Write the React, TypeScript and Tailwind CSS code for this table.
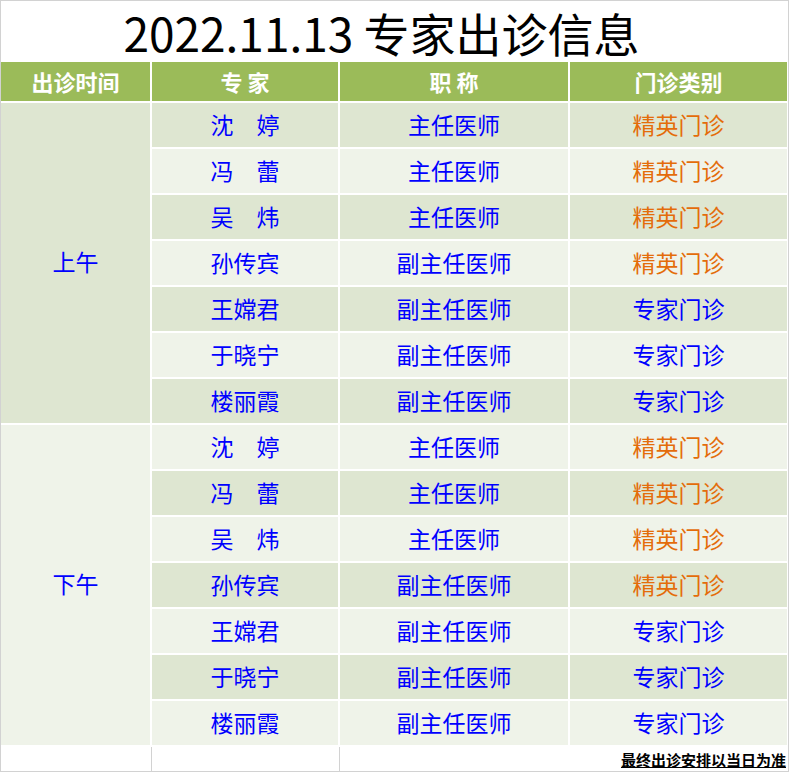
import React from "react";

type Row = { name: string; title: string; type: string; elite: boolean };

const rows: Row[] = [
  { name: "沈\u3000婷", title: "主任医师", type: "精英门诊", elite: true },
  { name: "冯\u3000蕾", title: "主任医师", type: "精英门诊", elite: true },
  { name: "吴\u3000炜", title: "主任医师", type: "精英门诊", elite: true },
  { name: "孙传宾", title: "副主任医师", type: "精英门诊", elite: true },
  { name: "王嫦君", title: "副主任医师", type: "专家门诊", elite: false },
  { name: "于晓宁", title: "副主任医师", type: "专家门诊", elite: false },
  { name: "楼丽霞", title: "副主任医师", type: "专家门诊", elite: false },
];

const DARK = "bg-[#dee6d1]";
const LIGHT = "bg-[#eff3e9]";

export default function App() {
  const cells: React.ReactNode[] = [];
  const sessions = [
    { label: "上午", offset: 0, bg: DARK },
    { label: "下午", offset: 7, bg: LIGHT },
  ];
  sessions.forEach((s) => {
    cells.push(
      <div
        key={s.label}
        className={`${s.bg} flex items-center justify-center pb-[4px] text-[23px] text-[#0000ff]`}
        style={{ gridRow: `${s.offset + 2} / span 7`, gridColumn: "1" }}
      >
        {s.label}
      </div>
    );
    rows.forEach((r, i) => {
      const idx = s.offset + i;
      const bg = idx % 2 === 0 ? DARK : LIGHT;
      const rowStyle = { gridRow: `${idx + 2}` };
      cells.push(
        <div key={`${s.label}-n-${i}`} className={`${bg} flex items-center justify-center pb-[2px] text-[23px] text-[#0000ff]`} style={{ ...rowStyle, gridColumn: "2" }}>
          {r.name}
        </div>,
        <div key={`${s.label}-t-${i}`} className={`${bg} flex items-center justify-center pb-[2px] text-[23px] text-[#0000ff]`} style={{ ...rowStyle, gridColumn: "3" }}>
          {r.title}
        </div>,
        <div
          key={`${s.label}-c-${i}`}
          className={`${bg} flex items-center justify-center pb-[2px] text-[23px] ${r.elite ? "text-[#e46c0a]" : "text-[#0000ff]"}`}
          style={{ ...rowStyle, gridColumn: "4" }}
        >
          {r.type}
        </div>
      );
    });
  });

  return (
    <div
      className="w-[789px] bg-white border border-[#d2d2d2] pr-[1px]"
      style={{ fontFamily: '"Noto Sans CJK SC", "Noto Sans", sans-serif' }}
    >
      <div className="h-[61px] flex items-center justify-center pr-[25px] text-[46px] leading-none text-black">
        2022.11.13 专家出诊信息
      </div>
      <div className="grid grid-cols-[149px_186px_228px_217px] grid-rows-[39px_repeat(14,44px)] gap-[2px]">
        {["出诊时间", "专 家", "职 称", "门诊类别"].map((h) => (
          <div key={h} className="bg-[#9bbb59] flex items-center justify-center text-[22px] font-bold text-white">
            {h}
          </div>
        ))}
        {cells}
      </div>
      <div className="mt-[2px] h-[24px] flex">
        <div className="w-[151px] border-r border-[#d2d2d2]" />
        <div className="w-[188px] border-r border-[#d2d2d2]" />
        <div className="flex-1 flex items-center justify-end pr-[1px]">
          <span className="text-[15px] font-bold text-black underline leading-none">最终出诊安排以当日为准</span>
        </div>
      </div>
    </div>
  );
}
